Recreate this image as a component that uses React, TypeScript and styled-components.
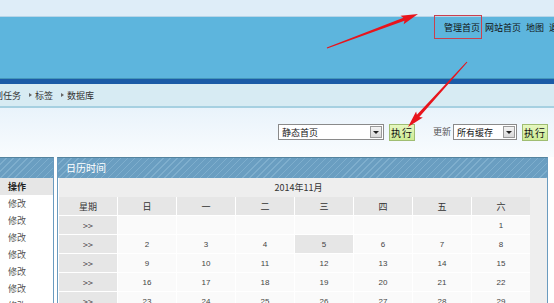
import React from "react";
import styled, { createGlobalStyle } from "styled-components";

const GlobalStyle = createGlobalStyle`
  html, body {
    margin: 0;
    padding: 0;
    background: #fff;
    overflow: hidden;
  }
  body {
    font-family: "Noto Sans CJK SC", "Liberation Sans", sans-serif;
    font-size: 9px;
    color: #333;
  }
`;

const Page = styled.div`
  position: relative;
  width: 554px;
  height: 303px;
  overflow: hidden;
`;

const TopBand = styled.div`
  height: 16px;
  background: #deedf8;
  border-bottom: 1px solid #b7d5e8;
`;

const Banner = styled.div`
  height: 61px;
  background: #5db5dd;
  display: flex;
  gap: 5px;
  padding: 5px 0 0 444px;
  box-sizing: border-box;
  white-space: nowrap;
`;

const TopLink = styled.span`
  line-height: 11px;
  color: #111;
`;

const DarkStripe = styled.div`
  height: 5px;
  background: #1b5ba7;
  border-top: 1px solid #4596b9;
`;

const NavBar = styled.div`
  height: 22px;
  background: #d7ebf3;
  border-bottom: 2px solid #a6d0e1;
  display: flex;
  align-items: center;
  gap: 8px;
  white-space: nowrap;
`;

const NavItem = styled.span<{ $shift?: number }>`
  display: flex;
  align-items: center;
  gap: 3px;
  color: #333;
  margin-left: ${(p) => p.$shift ?? 0}px;
`;

const Caret = styled.span`
  width: 0;
  height: 0;
  border-top: 2px solid transparent;
  border-bottom: 2px solid transparent;
  border-left: 3px solid #666;
`;

const Toolbar = styled.div`
  height: 49px;
  box-sizing: border-box;
  padding: 16px 6px 0 0;
  background: linear-gradient(#e9f3fb, #f9fcfe);
  display: flex;
  justify-content: flex-end;
  align-items: flex-start;
`;

const Select = styled.div<{ $width: number }>`
  width: ${(p) => p.$width}px;
  height: 16px;
  box-sizing: border-box;
  border: 1px solid #8a8a8a;
  background: #fff;
  display: flex;
  align-items: center;
  justify-content: space-between;
  padding: 0 1px 0 3px;
  color: #111;
`;

const DropButton = styled.span`
  width: 12px;
  height: 12px;
  box-sizing: border-box;
  border: 1px solid #9a9a9a;
  background: linear-gradient(#f4f4f4, #d8d8d8);
  display: flex;
  align-items: center;
  justify-content: center;
  &::after {
    content: "";
    border-left: 3px solid transparent;
    border-right: 3px solid transparent;
    border-top: 3px solid #222;
  }
`;

const RunButton = styled.div<{ $gapRight: number }>`
  width: 26px;
  height: 17px;
  box-sizing: border-box;
  margin: 0 ${(p) => p.$gapRight}px 0 5px;
  border: 1px solid #9fbd72;
  background: linear-gradient(#e6f7c0, #cdeb95);
  color: #111;
  font-size: 10px;
  display: flex;
  align-items: center;
  justify-content: center;
  letter-spacing: 1px;
`;

const Label = styled.span`
  line-height: 16px;
  color: #555;
  margin-right: 2px;
`;

const Main = styled.div`
  display: flex;
  gap: 3px;
  align-items: stretch;
  height: 146px;
`;

const Panel = styled.div<{ $width: number }>`
  width: ${(p) => p.$width}px;
  flex: 0 0 ${(p) => p.$width}px;
  box-sizing: border-box;
  border-top: 1px solid #54849f;
  border-right: 1px solid #6a9bbf;
  background: #fff;
`;

const CalPanel = styled(Panel)`
  border-left: 1px solid #6a9bbf;
  background: #eeeeee;
  box-shadow: inset 1px 0 #fff;
`;

const PanelHead = styled.div`
  height: 20px;
  background: repeating-linear-gradient(
    135deg,
    #6a9ec1 0 4px,
    #7eaecd 4px 5px
  );
  color: #fff;
  line-height: 20px;
  padding-left: 8px;
  font-size: 10px;
`;

const ListRow = styled.div<{ $head?: boolean }>`
  height: 17px;
  line-height: 17px;
  padding-left: 8px;
  background: ${(p) => (p.$head ? "#e6e6e6" : "#fff")};
  color: ${(p) => (p.$head ? "#222" : "#555")};
  font-weight: ${(p) => (p.$head ? 700 : 400)};
`;

const MonthRow = styled.div`
  height: 19px;
  line-height: 19px;
  text-align: center;
  color: #333;
  padding-right: 8px;
`;

const CalGrid = styled.div`
  margin-left: 1px;
  width: 471px;
  display: grid;
  grid-template-columns: repeat(8, 58px);
  grid-auto-rows: 18px;
  gap: 1px;
  background: #fff;
`;

const Cell = styled.div<{ $kind?: "head" | "week" | "today" }>`
  display: flex;
  align-items: center;
  justify-content: center;
  background: ${(p) => (p.$kind ? "#e6e6e6" : "#fafafa")};
  color: ${(p) => (p.$kind === "head" ? "#333" : "#444")};
  font-family: ${(p) =>
    p.$kind === "head" || p.$kind === "week"
      ? '"Noto Sans CJK SC", sans-serif'
      : '"Liberation Sans", sans-serif'};
  font-size: ${(p) => (p.$kind === "head" || p.$kind === "week" ? "9px" : "8px")};
`;

const Overlay = styled.svg`
  position: absolute;
  left: 0;
  top: 0;
  pointer-events: none;
`;

const arrow = (x1: number, y1: number, x2: number, y2: number) => {
  const dx = x2 - x1;
  const dy = y2 - y1;
  const len = Math.hypot(dx, dy);
  const ux = dx / len;
  const uy = dy / len;
  const nx = -uy;
  const ny = ux;
  const bx = x2 - ux * 15;
  const by = y2 - uy * 15;
  const pt = (x: number, y: number) => `${x.toFixed(1)},${y.toFixed(1)}`;
  return [
    pt(x1 + nx * 0.5, y1 + ny * 0.5),
    pt(bx + nx * 1.6, by + ny * 1.6),
    pt(bx + nx * 4.5 - ux * 2, by + ny * 4.5 - uy * 2),
    pt(x2, y2),
    pt(bx - nx * 4.5 - ux * 2, by - ny * 4.5 - uy * 2),
    pt(bx - nx * 1.6, by - ny * 1.6),
    pt(x1 - nx * 0.5, y1 - ny * 0.5),
  ].join(" ");
};

const weekHeads = ["星期", "日", "一", "二", "三", "四", "五", "六"];
const weeks: (number | null)[][] = [
  [null, null, null, null, null, null, 1],
  [2, 3, 4, 5, 6, 7, 8],
  [9, 10, 11, 12, 13, 14, 15],
  [16, 17, 18, 19, 20, 21, 22],
  [23, 24, 25, 26, 27, 28, 29],
  [30, null, null, null, null, null, null],
];

export default function App() {
  return (
    <Page>
      <GlobalStyle />
      <TopBand />
      <Banner>
        <TopLink>管理首页</TopLink>
        <TopLink>网站首页</TopLink>
        <TopLink>地图</TopLink>
        <TopLink>退出</TopLink>
      </Banner>
      <DarkStripe />
      <NavBar>
        <NavItem $shift={-21}>
          <Caret />
          计划任务
        </NavItem>
        <NavItem>
          <Caret />
          标签
        </NavItem>
        <NavItem>
          <Caret />
          数据库
        </NavItem>
      </NavBar>
      <Toolbar>
        <Select $width={106}>
          静态首页
          <DropButton />
        </Select>
        <RunButton $gapRight={18}>执行</RunButton>
        <Label>更新</Label>
        <Select $width={64}>
          所有缓存
          <DropButton />
        </Select>
        <RunButton $gapRight={0}>执行</RunButton>
      </Toolbar>
      <Main>
        <Panel $width={54}>
          <PanelHead />
          <ListRow $head>操作</ListRow>
          {Array.from({ length: 7 }).map((_, i) => (
            <ListRow key={i}>修改</ListRow>
          ))}
        </Panel>
        <CalPanel $width={491}>
          <PanelHead>日历时间</PanelHead>
          <MonthRow>2014年11月</MonthRow>
          <CalGrid>
            {weekHeads.map((h) => (
              <Cell key={h} $kind="head">
                {h}
              </Cell>
            ))}
            {weeks.map((w, wi) => (
              <React.Fragment key={wi}>
                <Cell $kind="week">&gt;&gt;</Cell>
                {w.map((d, di) => (
                  <Cell key={di} $kind={d === 5 ? "today" : undefined}>
                    {d ?? ""}
                  </Cell>
                ))}
              </React.Fragment>
            ))}
          </CalGrid>
        </CalPanel>
      </Main>
      <Overlay width={554} height={303} viewBox="0 0 554 303">
        <rect x={434.5} y={15.5} width={47} height={23} fill="none" stroke="#c9404e" strokeWidth={1} />
        <polygon points={arrow(327, 48, 418, 14)} fill="#e8141c" />
        <polygon points={arrow(467, 62, 408, 127)} fill="#e8141c" />
      </Overlay>
    </Page>
  );
}
